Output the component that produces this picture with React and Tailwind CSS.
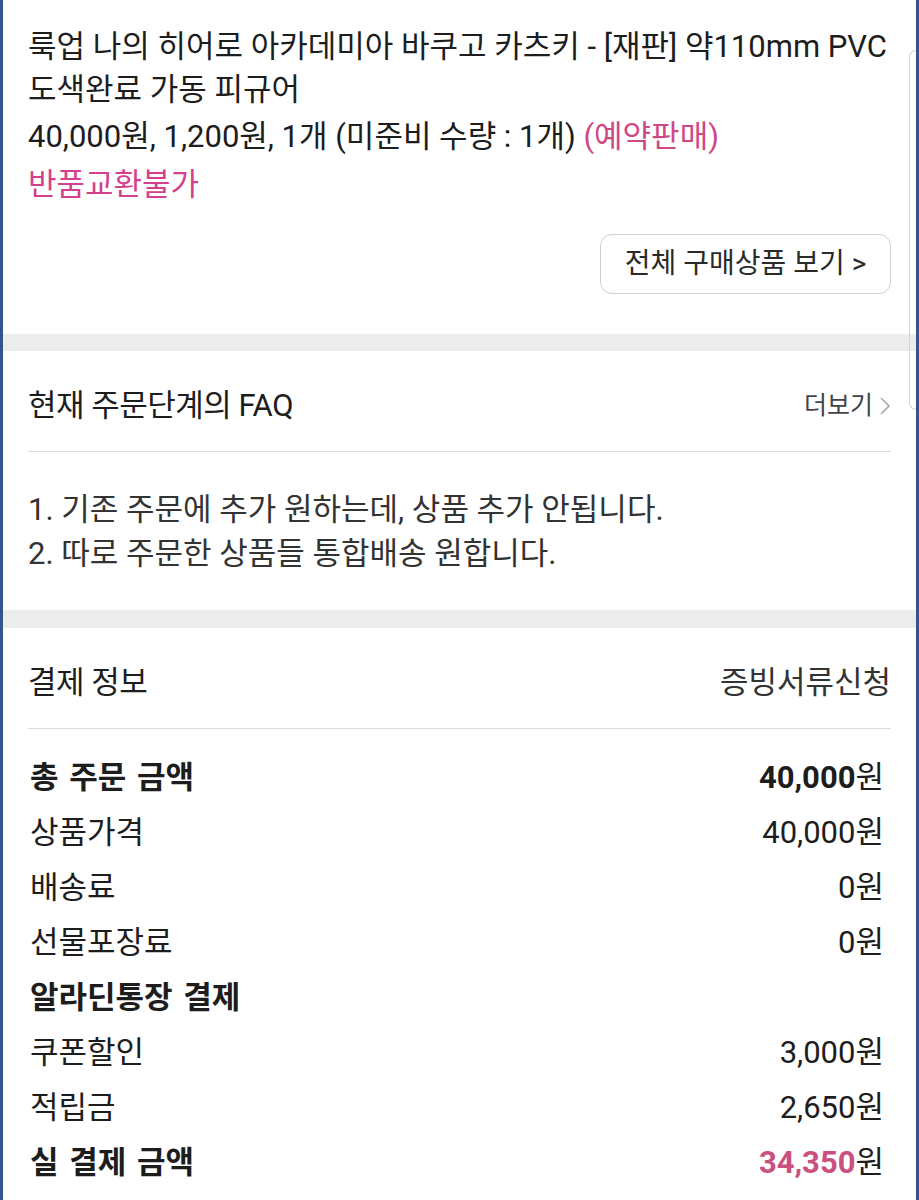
import React from 'react';

const rows = [
  { label: '총 주문 금액', value: '40,000', bold: true },
  { label: '상품가격', value: '40,000' },
  { label: '배송료', value: '0' },
  { label: '선물포장료', value: '0' },
  { label: '알라딘통장 결제', value: null, bold: true },
  { label: '쿠폰할인', value: '3,000' },
  { label: '적립금', value: '2,650' },
  { label: '실 결제 금액', value: '34,350', bold: true, pink: true },
];

const faqs = ['1. 기존 주문에 추가 원하는데, 상품 추가 안됩니다.', '2. 따로 주문한 상품들 통합배송 원합니다.'];

const App = () => {
  return (
    <div
      className="relative h-[1200px] w-full overflow-hidden bg-white border-x-[3px] border-[#33548c] text-[31px] text-[#1d1d1d]"
      style={{ fontFamily: 'Roboto, "Noto Sans CJK KR", sans-serif' }}
    >
      {/* edge handle */}
      <div className="absolute right-0 top-[50px] h-[360px] w-[7px] rounded-l-[10px] border border-r-0 border-[#d4d4d4]" />

      {/* ordered item */}
      <section className="px-[25px] pt-[25px] pb-[40px]">
        <p className="leading-[43px]">
          룩업 나의 히어로 아카데미아 바쿠고 카츠키 - [재판] 약110mm PVC 도색완료 가동 피규어
        </p>
        <p className="mt-[2px] leading-[48px]">
          40,000원, 1,200원, 1개 (미준비 수량 : 1개) <span className="text-[#cf4886]">(예약판매)</span>
        </p>
        <p className="leading-[48px] text-[#d5408d]">반품교환불가</p>
        <div className="mt-[25px] flex justify-end">
          <button className="h-[60px] w-[291px] rounded-[12px] border border-[#cfcfcf] text-[28px] text-[#2a2a2a]">
            전체 구매상품 보기 &gt;
          </button>
        </div>
      </section>

      <div className="h-[17px] bg-[#ececec]" />

      {/* FAQ */}
      <section>
        <div className="mx-[25px] flex h-[101px] items-center justify-between border-b border-[#dcdcdc] pt-[10px]">
          <h2 className="tracking-[-0.5px]">현재 주문단계의 FAQ</h2>
          <div className="flex items-center gap-[6px] text-[25px] text-[#444]">
            더보기
            <svg width="12" height="22" viewBox="0 0 12 22" fill="none" stroke="#a8a8a8" strokeWidth="1.6">
              <polyline points="2,3 10,11 2,19" />
            </svg>
          </div>
        </div>
        <ul className="px-[25px] pt-[36px] pb-[34px] leading-[44px] text-[#333]">
          {faqs.map((f) => (
            <li key={f}>{f}</li>
          ))}
        </ul>
      </section>

      <div className="h-[18px] bg-[#ececec]" />

      {/* payment */}
      <section>
        <div className="mx-[25px] flex h-[101px] items-center justify-between border-b border-[#dcdcdc] pt-[10px]">
          <h2 className="tracking-[-0.5px]">결제 정보</h2>
          <span className="text-[#333]">증빙서류신청</span>
        </div>
        <div className="pl-[27px] pr-[32px] pt-[22px]">
          {rows.map((r) => (
            <div key={r.label} className="flex h-[55px] items-center justify-between">
              <span className={r.bold ? 'font-bold [word-spacing:3px]' : ''}>{r.label}</span>
              {r.value !== null && (
                <span>
                  <span className={`${r.bold ? 'font-bold' : ''} ${r.pink ? 'text-[#c9507f]' : ''}`}>{r.value}</span>원
                </span>
              )}
            </div>
          ))}
        </div>
      </section>
    </div>
  );
};

export default App;
